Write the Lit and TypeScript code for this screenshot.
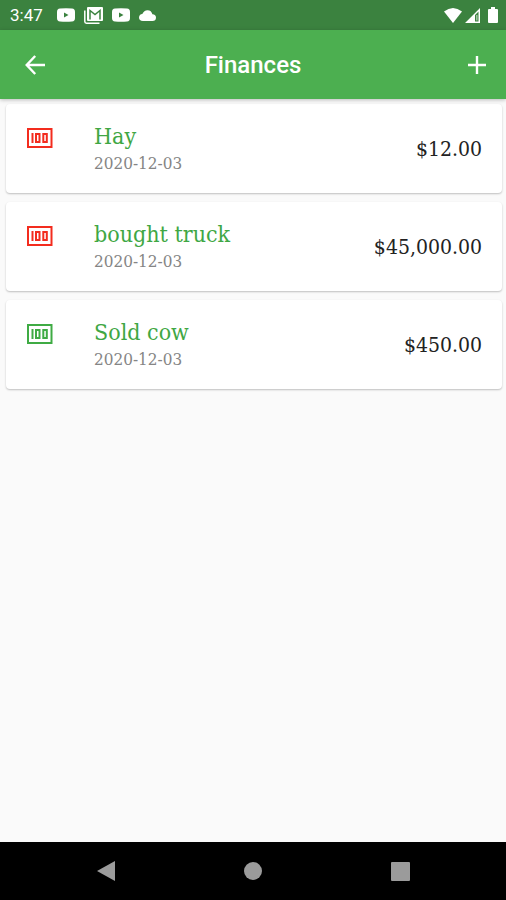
import { LitElement, html, css, svg } from "lit";
import { customElement, property, state } from "lit/decorators.js";
import { classMap } from "lit/directives/class-map.js";

interface Entry {
  name: string;
  date: string;
  amount: number;
  kind: "expense" | "income";
}

const videoIcon = html`<svg width="18" height="14" viewBox="0 0 18 14" aria-hidden="true">
  <path fill="#fff" fill-rule="evenodd" d="M3 .5Q9 0 15 .5Q18 .7 18 4V10Q18 13.300 15 13.500Q9 14 3 13.500Q0 13.300 0 10V4Q0 .7 3 .5ZM7 4.500V9.500L11.500 7Z"/>
</svg>`;

@customElement("status-bar")
export class StatusBar extends LitElement {
  static styles = css`
    :host {
      display: flex;
      align-items: center;
      box-sizing: border-box;
      height: 30px;
      padding: 0 8px 0 10px;
      background: #3b823f;
      color: #fff;
      font: 400 17px/30px Roboto, sans-serif;
    }
    .notices {
      display: flex;
      align-items: center;
      gap: 9px;
      flex: 1;
      margin-left: 14px;
    }
    .system {
      display: flex;
      align-items: center;
      gap: 3px;
    }
    .battery {
      margin-left: 5px;
    }
    svg {
      display: block;
    }
  `;

  render() {
    return html`
      <span>3:47</span>
      <div class="notices">
        ${videoIcon}
        <svg width="19" height="17" viewBox="0 0 19 17" fill="none" aria-hidden="true">
          <path d="M.8 3.500V14.500Q.8 16.200 2.500 16.200H15.500" stroke="#fff" stroke-width="1.500"/>
          <rect x="3" width="16" height="14" rx="1" fill="#fff"/>
          <path d="M6 12.500V3.500L11 7.500L16 3.500V12.500" stroke="#3b823f" stroke-width="1.500"/>
        </svg>
        ${videoIcon}
        <svg width="17" height="11" viewBox="0 0 17 11" aria-hidden="true">
          <path fill="#fff" d="M4 11Q0 10.800 0 7.500Q.3 4.300 3.300 4Q5 .2 8.500 .2Q12.500 .4 13.400 4.300Q17 4.600 17 7.700Q16.800 11 13.500 11Z"/>
        </svg>
      </div>
      <div class="system">
        <svg width="18" height="15" viewBox="0 0 18 15" aria-hidden="true">
          <path fill="#fff" d="M0 3.500Q9-3.500 18 3.500L9 15Z"/>
        </svg>
        <svg width="15" height="15" viewBox="0 0 15 15" aria-hidden="true">
          <path fill="#fff" fill-rule="evenodd" d="M0 15L15 0V15ZM10 7V13.500H13.500V3.500Z"/>
          <path fill="#fff" d="M11.500 7H12.300V12.500H11.500Z"/>
        </svg>
        <svg class="battery" width="10" height="16" viewBox="0 0 10 16" aria-hidden="true">
          <path fill="#fff" d="M3 0H7V2H9Q10 2 10 3V15Q10 16 9 16H1Q0 16 0 15V3Q0 2 1 2H3Z"/>
        </svg>
      </div>
    `;
  }
}

@customElement("title-bar")
export class TitleBar extends LitElement {
  @property() heading = "";

  static styles = css`
    :host {
      position: relative;
      display: grid;
      grid-template-columns: 58px 1fr 58px;
      align-items: center;
      height: 69px;
      background: #4caf50;
      box-shadow: 0 1px 4px rgba(0, 0, 0, 0.25);
    }
    h1 {
      margin: 0;
      color: #fff;
      text-align: center;
      font: 500 24px/32px Roboto, sans-serif;
    }
    button {
      display: grid;
      place-items: center;
      height: 58px;
      padding: 0;
      border: 0;
      background: none;
    }
    .back {
      padding-left: 12px;
    }
  `;

  render() {
    return html`
      <button class="back" aria-label="Back">
        <svg width="20" height="20" viewBox="0 0 20 20" fill="none" stroke="#fff" stroke-width="2.400" aria-hidden="true">
          <path d="M20 10H2M10.200 1L1.700 10L10.200 19"/>
        </svg>
      </button>
      <h1>${this.heading}</h1>
      <button aria-label="Add entry">
        <svg width="18" height="18" viewBox="0 0 18 18" fill="none" stroke="#fff" stroke-width="2.400" aria-hidden="true">
          <path d="M9 0V18M0 9H18"/>
        </svg>
      </button>
    `;
  }
}

@customElement("finance-card")
export class FinanceCard extends LitElement {
  @property({ attribute: false }) entry!: Entry;

  static styles = css`
    :host {
      display: grid;
      grid-template-columns: 67px 1fr auto;
      box-sizing: border-box;
      min-height: 89px;
      padding: 16px 20px 16px 21px;
      border-radius: 4px;
      background: #fff;
      box-shadow: 0 1px 2px rgba(0, 0, 0, 0.24);
      font-family: "Roboto Slab", "DejaVu Serif Condensed", "DejaVu Serif", serif;
    }
    .icon {
      margin-top: 8px;
      color: #3fab44;
    }
    .expense {
      color: #f32c1e;
    }
    h2 {
      margin: 0;
      color: #3fa744;
      font-size: 23px;
      font-weight: 400;
      line-height: 32px;
    }
    time {
      display: block;
      color: #858585;
      font-size: 17px;
      line-height: 22px;
    }
    .amount {
      align-self: center;
      color: #222;
      font-size: 21px;
      line-height: 28px;
    }
  `;

  render() {
    const { name, date, amount, kind } = this.entry;
    const money = amount.toLocaleString("en-US", { style: "currency", currency: "USD" });
    return html`
      <svg class=${classMap({ icon: true, expense: kind === "expense" })}
        width="26" height="20" viewBox="0 0 26 20" role="img" aria-label=${kind}>
        ${svg`<g fill="none" stroke="currentColor" stroke-width="2">
          <rect x="1" y="1" width="23.500" height="18"/>
          <path d="M5.500 5V15"/>
          <rect x="9" y="6" width="3.500" height="8"/>
          <rect x="16.300" y="6" width="3.500" height="8"/>
        </g>`}
      </svg>
      <div>
        <h2>${name}</h2>
        <time datetime=${date}>${date}</time>
      </div>
      <span class="amount">${money}</span>
    `;
  }
}

@customElement("system-nav")
export class SystemNav extends LitElement {
  static styles = css`
    :host {
      display: grid;
      grid-template-columns: repeat(3, 1fr);
      height: 58px;
      padding: 0 32px;
      background: #000;
    }
    button {
      display: grid;
      place-items: center;
      padding: 0;
      border: 0;
      background: none;
    }
  `;

  render() {
    return html`
      <button aria-label="Back">
        <svg width="18" height="20" viewBox="0 0 18 20" aria-hidden="true"><path fill="#9b9b9b" d="M0 10L18 0V20Z"/></svg>
      </button>
      <button aria-label="Home">
        <svg width="18" height="18" viewBox="0 0 18 18" aria-hidden="true"><circle cx="9" cy="9" r="9" fill="#9b9b9b"/></svg>
      </button>
      <button aria-label="Recent apps">
        <svg width="19" height="19" viewBox="0 0 19 19" aria-hidden="true"><rect width="19" height="19" rx="1" fill="#9b9b9b"/></svg>
      </button>
    `;
  }
}

@customElement("app-root")
export class AppRoot extends LitElement {
  @state() private entries: Entry[] = [
    { name: "Hay", date: "2020-12-03", amount: 12, kind: "expense" },
    { name: "bought truck", date: "2020-12-03", amount: 45000, kind: "expense" },
    { name: "Sold cow", date: "2020-12-03", amount: 450, kind: "income" },
  ];

  static styles = css`
    :host {
      display: flex;
      flex-direction: column;
      min-height: 100vh;
      background: #fafafa;
    }
    ul {
      display: flex;
      flex-direction: column;
      gap: 9px;
      flex: 1;
      margin: 0;
      padding: 5px 4px 10px 6px;
      list-style: none;
    }
  `;

  render() {
    return html`
      <status-bar></status-bar>
      <title-bar heading="Finances"></title-bar>
      <ul>
        ${this.entries.map((entry) => html`<li><finance-card .entry=${entry}></finance-card></li>`)}
      </ul>
      <system-nav></system-nav>
    `;
  }
}
